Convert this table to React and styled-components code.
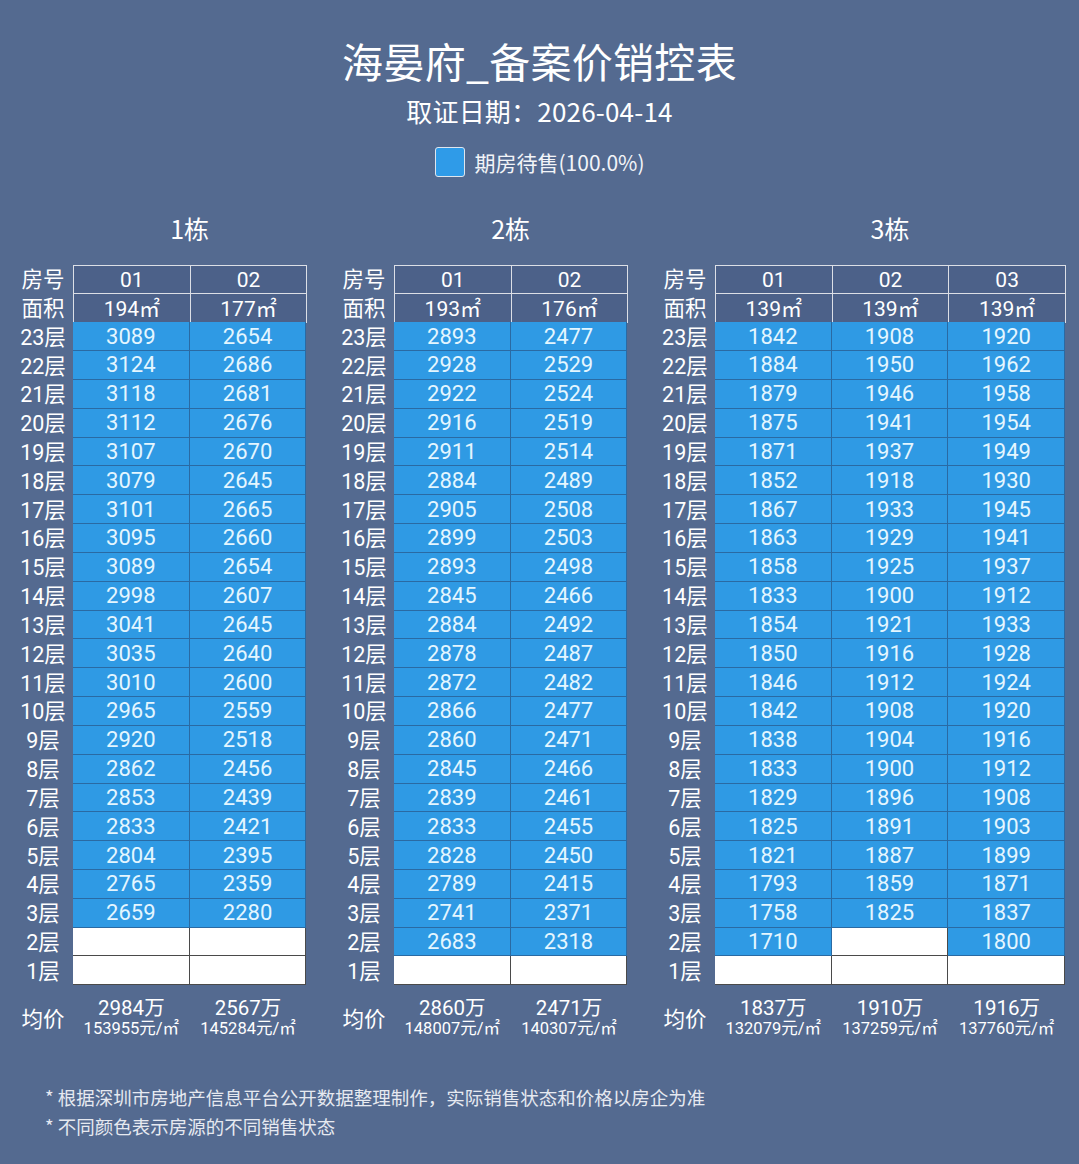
import React from "react";
import styled, { createGlobalStyle } from "styled-components";

const CJK = `"Noto Sans CJK SC", "Noto Sans", sans-serif`;

const GlobalStyle = createGlobalStyle`
  html, body { margin: 0; padding: 0; background: #546a90; }
  body { font-family: Roboto, "Noto Sans CJK SC", "Noto Sans", sans-serif; }
  * { box-sizing: border-box; }
`;

const ROW_H = 28.83;
const LABEL_W = 58;
const CELL_W = 116.7;

const Page = styled.div`
  width: 1079px;
  min-height: 1164px;
  background: #546a90;
  color: #ffffff;
  padding-top: 30px;
  overflow: hidden;
`;

const Title = styled.h1`
  margin: 0;
  height: 60px;
  line-height: 60px;
  text-align: center;
  font-family: ${CJK};
  font-size: 41px;
  font-weight: 400;
  color: #ffffff;
  letter-spacing: 0.3px;
`;

const DateLine = styled.div`
  margin-top: 3px;
  height: 36px;
  line-height: 36px;
  text-align: center;
  font-family: ${CJK};
  font-size: 26px;
  color: #ffffff;
  letter-spacing: 0.2px;
`;

const Legend = styled.div`
  margin-top: 18px;
  height: 30px;
  display: flex;
  justify-content: center;
  align-items: center;
  gap: 10px;
`;

const Swatch = styled.span`
  width: 30px;
  height: 30px;
  border-radius: 3px;
  background: #2f9be8;
  border: 1.5px solid #dfe6ef;
`;

const LegendText = styled.span`
  font-family: ${CJK};
  font-size: 21px;
  color: #f2f4f8;
`;

const Buildings = styled.div`
  margin-top: 33px;
  padding-left: 15px;
  display: flex;
  gap: 29.6px;
  align-items: flex-start;
`;

const Building = styled.section`
  display: flex;
  flex-direction: column;
`;

const BuildingTitle = styled.div`
  padding-left: ${LABEL_W}px;
  height: 36px;
  line-height: 36px;
  text-align: center;
  font-family: ${CJK};
  font-size: 25px;
  color: #ffffff;
  margin-bottom: 18.6px;
`;

const Grid = styled.div`
  display: grid;
  grid-template-columns: ${LABEL_W}px repeat(${(p) => p.$cols}, ${CELL_W}px);
  grid-auto-rows: ${ROW_H}px;
`;

const RowLabel = styled.div`
  display: flex;
  align-items: center;
  justify-content: center;
  font-size: 21.5px;
  color: #ffffff;
  padding-right: 2px;
  padding-bottom: 3px;
  white-space: nowrap;
`;

const HeadCell = styled.div`
  display: flex;
  align-items: center;
  justify-content: center;
  background: #4c6189;
  border: 1px solid #dcdfe6;
  margin: 0 -1px -1px 0;
  font-size: 21px;
  color: #ffffff;
  padding-bottom: ${(p) => (p.$cjk ? "2px" : "0")};
`;

const UnitCell = styled.div`
  display: flex;
  align-items: center;
  justify-content: center;
  font-size: 22px;
  background: ${(p) => (p.$empty ? "#ffffff" : "#2f9ae4")};
  color: #e4f6ff;
  border-right: ${(p) => (p.$empty ? "1.5px solid #4a4a4a" : "1px solid #2a6aa3")};
  border-bottom: ${(p) => (p.$empty ? "1.5px solid #4a4a4a" : "1px solid #2a6aa3")};
`;

const AvgRow = styled.div`
  margin-top: 12px;
  display: grid;
  grid-template-columns: ${LABEL_W}px repeat(${(p) => p.$cols}, ${CELL_W}px);
  align-items: center;
`;

const AvgLabel = styled.div`
  text-align: center;
  font-family: ${CJK};
  font-size: 21.5px;
  line-height: 28px;
  color: #ffffff;
  padding-right: 2px;
`;

const AvgCell = styled.div`
  display: flex;
  flex-direction: column;
  align-items: center;
  color: #ffffff;
`;

const AvgTotal = styled.span`
  font-size: 20.5px;
  line-height: 22px;
`;

const AvgUnit = styled.span`
  font-size: 16.5px;
  line-height: 20px;
`;

const Notes = styled.div`
  margin-top: 44px;
  padding-left: 45px;
  display: flex;
  flex-direction: column;
`;

const Note = styled.div`
  font-family: ${CJK};
  font-size: 18.5px;
  line-height: 29px;
  color: #e6e9f0;
`;

const buildings = [
  {
    name: "1栋",
    units: ["01", "02"],
    areas: ["194㎡", "177㎡"],
    prices: [
      [3089, 3124, 3118, 3112, 3107, 3079, 3101, 3095, 3089, 2998, 3041, 3035, 3010, 2965, 2920, 2862, 2853, 2833, 2804, 2765, 2659, null, null],
      [2654, 2686, 2681, 2676, 2670, 2645, 2665, 2660, 2654, 2607, 2645, 2640, 2600, 2559, 2518, 2456, 2439, 2421, 2395, 2359, 2280, null, null],
    ],
    avg: [
      ["2984万", "153955元/㎡"],
      ["2567万", "145284元/㎡"],
    ],
  },
  {
    name: "2栋",
    units: ["01", "02"],
    areas: ["193㎡", "176㎡"],
    prices: [
      [2893, 2928, 2922, 2916, 2911, 2884, 2905, 2899, 2893, 2845, 2884, 2878, 2872, 2866, 2860, 2845, 2839, 2833, 2828, 2789, 2741, 2683, null],
      [2477, 2529, 2524, 2519, 2514, 2489, 2508, 2503, 2498, 2466, 2492, 2487, 2482, 2477, 2471, 2466, 2461, 2455, 2450, 2415, 2371, 2318, null],
    ],
    avg: [
      ["2860万", "148007元/㎡"],
      ["2471万", "140307元/㎡"],
    ],
  },
  {
    name: "3栋",
    units: ["01", "02", "03"],
    areas: ["139㎡", "139㎡", "139㎡"],
    prices: [
      [1842, 1884, 1879, 1875, 1871, 1852, 1867, 1863, 1858, 1833, 1854, 1850, 1846, 1842, 1838, 1833, 1829, 1825, 1821, 1793, 1758, 1710, null],
      [1908, 1950, 1946, 1941, 1937, 1918, 1933, 1929, 1925, 1900, 1921, 1916, 1912, 1908, 1904, 1900, 1896, 1891, 1887, 1859, 1825, null, null],
      [1920, 1962, 1958, 1954, 1949, 1930, 1945, 1941, 1937, 1912, 1933, 1928, 1924, 1920, 1916, 1912, 1908, 1903, 1899, 1871, 1837, 1800, null],
    ],
    avg: [
      ["1837万", "132079元/㎡"],
      ["1910万", "137259元/㎡"],
      ["1916万", "137760元/㎡"],
    ],
  },
];

const floors = Array.from({ length: 23 }, (_, i) => 23 - i);

function BuildingTable({ b }) {
  const cols = b.units.length;
  return (
    <Building>
      <BuildingTitle>{b.name}</BuildingTitle>
      <Grid $cols={cols}>
        <RowLabel>房号</RowLabel>
        {b.units.map((u) => (
          <HeadCell key={"u" + u}>{u}</HeadCell>
        ))}
        <RowLabel>面积</RowLabel>
        {b.areas.map((a, i) => (
          <HeadCell key={"a" + i} $cjk>
            {a}
          </HeadCell>
        ))}
        {floors.map((f, fi) => (
          <React.Fragment key={f}>
            <RowLabel>{f}层</RowLabel>
            {b.prices.map((col, ci) => {
              const v = col[fi];
              return (
                <UnitCell key={ci} $empty={v == null}>
                  {v ?? ""}
                </UnitCell>
              );
            })}
          </React.Fragment>
        ))}
      </Grid>
      <AvgRow $cols={cols}>
        <AvgLabel>均价</AvgLabel>
        {b.avg.map(([t, u], i) => (
          <AvgCell key={i}>
            <AvgTotal>{t}</AvgTotal>
            <AvgUnit>{u}</AvgUnit>
          </AvgCell>
        ))}
      </AvgRow>
    </Building>
  );
}

export default function App() {
  return (
    <>
      <GlobalStyle />
      <Page>
        <Title>海晏府_备案价销控表</Title>
        <DateLine>取证日期：2026-04-14</DateLine>
        <Legend>
          <Swatch />
          <LegendText>期房待售(100.0%)</LegendText>
        </Legend>
        <Buildings>
          {buildings.map((b) => (
            <BuildingTable key={b.name} b={b} />
          ))}
        </Buildings>
        <Notes>
          <Note>* 根据深圳市房地产信息平台公开数据整理制作，实际销售状态和价格以房企为准</Note>
          <Note>* 不同颜色表示房源的不同销售状态</Note>
        </Notes>
      </Page>
    </>
  );
}
